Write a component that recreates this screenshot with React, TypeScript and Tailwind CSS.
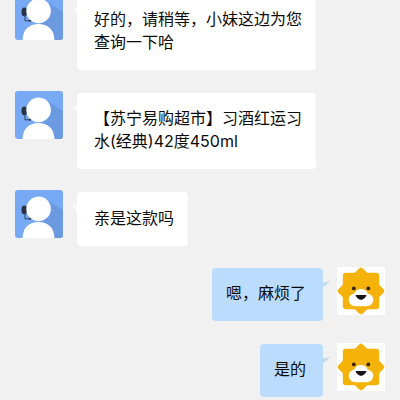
type Message = {
  id: number
  from: 'agent' | 'me'
  lines: string[]
  gap: string
}

const messages: Message[] = [
  { id: 1, from: 'agent', lines: ['好的，请稍等，小妹这边为您', '查询一下哈'], gap: '-mt-2 h-[99px]' },
  { id: 2, from: 'agent', lines: ['【苏宁易购超市】习酒红运习', '水(经典)42度450ml'], gap: 'h-[99px]' },
  { id: 3, from: 'agent', lines: ['亲是这款吗'], gap: 'h-[77px]' },
  { id: 4, from: 'me', lines: ['嗯，麻烦了'], gap: 'h-[76px]' },
  { id: 5, from: 'me', lines: ['是的'], gap: 'h-[57px]' },
]

function AgentAvatar() {
  return (
    <svg viewBox="0 0 48 48" className="w-12 h-12 shrink-0 rounded-[3px]">
      <rect width="48" height="48" fill="#78a9f5" />
      <path d="M34 11 L48 20 V48 H38 L24 31 Z" fill="#6c9ae0" />
      <ellipse cx="9.3" cy="20" rx="2.8" ry="4.4" fill="#283347" />
      <path d="M10 23 V28.8 H16" fill="none" stroke="#344158" strokeWidth="1" />
      <circle cx="15" cy="28.8" r="1" fill="#283347" />
      <circle cx="23.6" cy="18.9" r="12.3" fill="#fff" />
      <path d="M7.5 48 C8 37 14.5 32 23.5 32 S39 37 39.5 48 Z" fill="#fff" />
    </svg>
  )
}

function LionAvatar() {
  return (
    <svg viewBox="0 0 48 48" className="w-12 h-12 shrink-0 rounded-[2px] bg-white">
      <g fill="#f5b30a" stroke="#f5b30a" strokeWidth="6" strokeLinejoin="round">
        <rect x="8.8" y="8.8" width="30.4" height="30.4" />
        <path d="M24 3.8 L44.2 24 L24 44.2 L3.8 24 Z" />
      </g>
      <path
        d="M24 22 C27.5 22 29.8 24 31 26.8 C34 27.4 36.3 29.6 36.3 32.8 C36.3 36.6 33 39.2 29.5 39.2 H18.5 C15 39.2 11.7 36.6 11.7 32.8 C11.7 29.6 14 27.4 17 26.8 C18.2 24 20.5 22 24 22 Z"
        fill="#fff"
      />
      <circle cx="16.8" cy="21.4" r="1.9" fill="#3a2408" />
      <circle cx="31.3" cy="21.4" r="1.9" fill="#3a2408" />
      <path d="M18.6 28 H29.4 C29.4 29.6 26.4 32.8 24 32.8 S18.6 29.6 18.6 28 Z" fill="#151313" />
    </svg>
  )
}

function Bubble({ message }: { message: Message }) {
  const mine = message.from === 'me'
  // Single-line agent bubbles sit a touch lower
  const agentPadding = message.lines.length === 1 ? 'pt-[15px] pb-4' : 'pt-[14px] pb-[17px]'

  return (
    <div
      className={
        mine
          ? 'relative mt-px mr-3.5 self-start rounded bg-[#bbdcfd] pl-[14px] pr-[17px] pt-[14px] pb-[16.5px]'
          : `relative mt-0.5 ml-3.5 self-start rounded bg-white pl-[17px] pr-[14px] ${agentPadding}`
      }
    >
      {message.lines.map((line) => (
        <p key={line} className="text-base leading-[22.5px] whitespace-nowrap">
          {line}
        </p>
      ))}
      {/* Bubble tail */}
      {mine ? (
        <svg viewBox="0 0 7 8" className="absolute left-full top-3 w-[7px] h-2">
          <path d="M0 2.5 Q4 2.5 7 0.5 Q5 4 0 7 Z" fill="#bed9e8" />
        </svg>
      ) : (
        <svg viewBox="0 0 7 8" className="absolute right-full top-3 w-[7px] h-2">
          <path d="M7 1.5 Q3 1.5 0 0.5 Q4 2.5 7 7 Z" fill="#fafafa" />
        </svg>
      )}
    </div>
  )
}

export default function App() {
  return (
    <div className="w-[400px] h-[400px] overflow-hidden bg-[#f1f1f1] text-[#0b0b0b] font-[Inter,'Noto_Sans_CJK_SC',sans-serif]">
      <div className="flex flex-col">
        {messages.map((m) => (
          <div
            key={m.id}
            className={`flex shrink-0 items-start px-[15px] ${m.from === 'me' ? 'justify-end' : ''} ${m.gap}`}
          >
            {m.from === 'agent' && <AgentAvatar />}
            <Bubble message={m} />
            {m.from === 'me' && <LionAvatar />}
          </div>
        ))}
      </div>
    </div>
  )
}
